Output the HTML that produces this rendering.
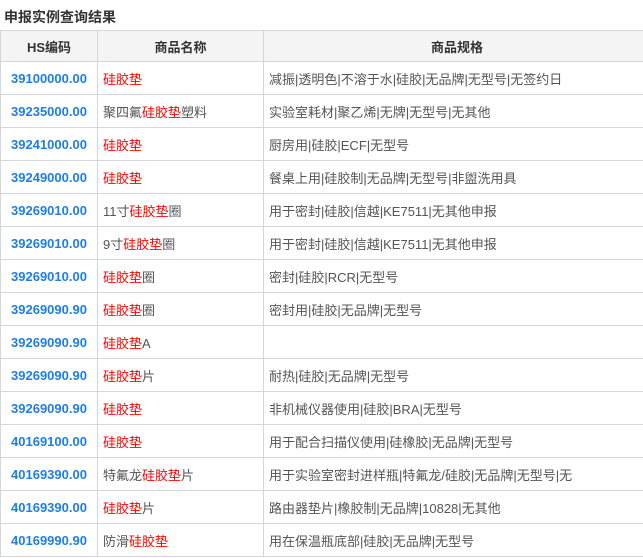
<!DOCTYPE html>
<html><head><meta charset="utf-8"><style>
body{margin:0;width:643px;height:558px;overflow:hidden;background:#fff;font-family:"Liberation Sans","Noto Sans CJK SC",sans-serif;font-size:13px;color:#555}
.t{position:absolute;left:4px;top:7px;font-size:14px;font-weight:bold;color:#333}
table{position:absolute;left:0;top:30px;border-collapse:collapse;table-layout:fixed;width:650px}
td,th{border:1px solid #d3d6dc;height:32px;padding:0 0 0 5px;white-space:nowrap;overflow:hidden;text-align:left}
th{background:#f4f4f4;color:#333;font-weight:bold;text-align:center;height:30px;padding:0}
td.c{color:#1e7ee8;font-weight:bold;text-align:center;padding:0}
b{color:#f00;font-weight:normal}
</style></head><body>
<div class="t">申报实例查询结果</div>
<table>
<col style="width:97px"><col style="width:166px"><col style="width:387px">
<tr><th>HS编码</th><th>商品名称</th><th>商品规格</th></tr>
<tr><td class="c">39100000.00</td><td><b>硅胶垫</b></td><td>减振|透明色|不溶于水|硅胶|无品牌|无型号|无签约日</td></tr>
<tr><td class="c">39235000.00</td><td>聚四氟<b>硅胶垫</b>塑料</td><td>实验室耗材|聚乙烯|无牌|无型号|无其他</td></tr>
<tr><td class="c">39241000.00</td><td><b>硅胶垫</b></td><td>厨房用|硅胶|ECF|无型号</td></tr>
<tr><td class="c">39249000.00</td><td><b>硅胶垫</b></td><td>餐桌上用|硅胶制|无品牌|无型号|非盥洗用具</td></tr>
<tr><td class="c">39269010.00</td><td>11寸<b>硅胶垫</b>圈</td><td>用于密封|硅胶|信越|KE7511|无其他申报</td></tr>
<tr><td class="c">39269010.00</td><td>9寸<b>硅胶垫</b>圈</td><td>用于密封|硅胶|信越|KE7511|无其他申报</td></tr>
<tr><td class="c">39269010.00</td><td><b>硅胶垫</b>圈</td><td>密封|硅胶|RCR|无型号</td></tr>
<tr><td class="c">39269090.90</td><td><b>硅胶垫</b>圈</td><td>密封用|硅胶|无品牌|无型号</td></tr>
<tr><td class="c">39269090.90</td><td><b>硅胶垫</b>A</td><td></td></tr>
<tr><td class="c">39269090.90</td><td><b>硅胶垫</b>片</td><td>耐热|硅胶|无品牌|无型号</td></tr>
<tr><td class="c">39269090.90</td><td><b>硅胶垫</b></td><td>非机械仪器使用|硅胶|BRA|无型号</td></tr>
<tr><td class="c">40169100.00</td><td><b>硅胶垫</b></td><td>用于配合扫描仪使用|硅橡胶|无品牌|无型号</td></tr>
<tr><td class="c">40169390.00</td><td>特氟龙<b>硅胶垫</b>片</td><td>用于实验室密封进样瓶|特氟龙/硅胶|无品牌|无型号|无</td></tr>
<tr><td class="c">40169390.00</td><td><b>硅胶垫</b>片</td><td>路由器垫片|橡胶制|无品牌|10828|无其他</td></tr>
<tr><td class="c">40169990.90</td><td>防滑<b>硅胶垫</b></td><td>用在保温瓶底部|硅胶|无品牌|无型号</td></tr>
</table>
</body></html>
